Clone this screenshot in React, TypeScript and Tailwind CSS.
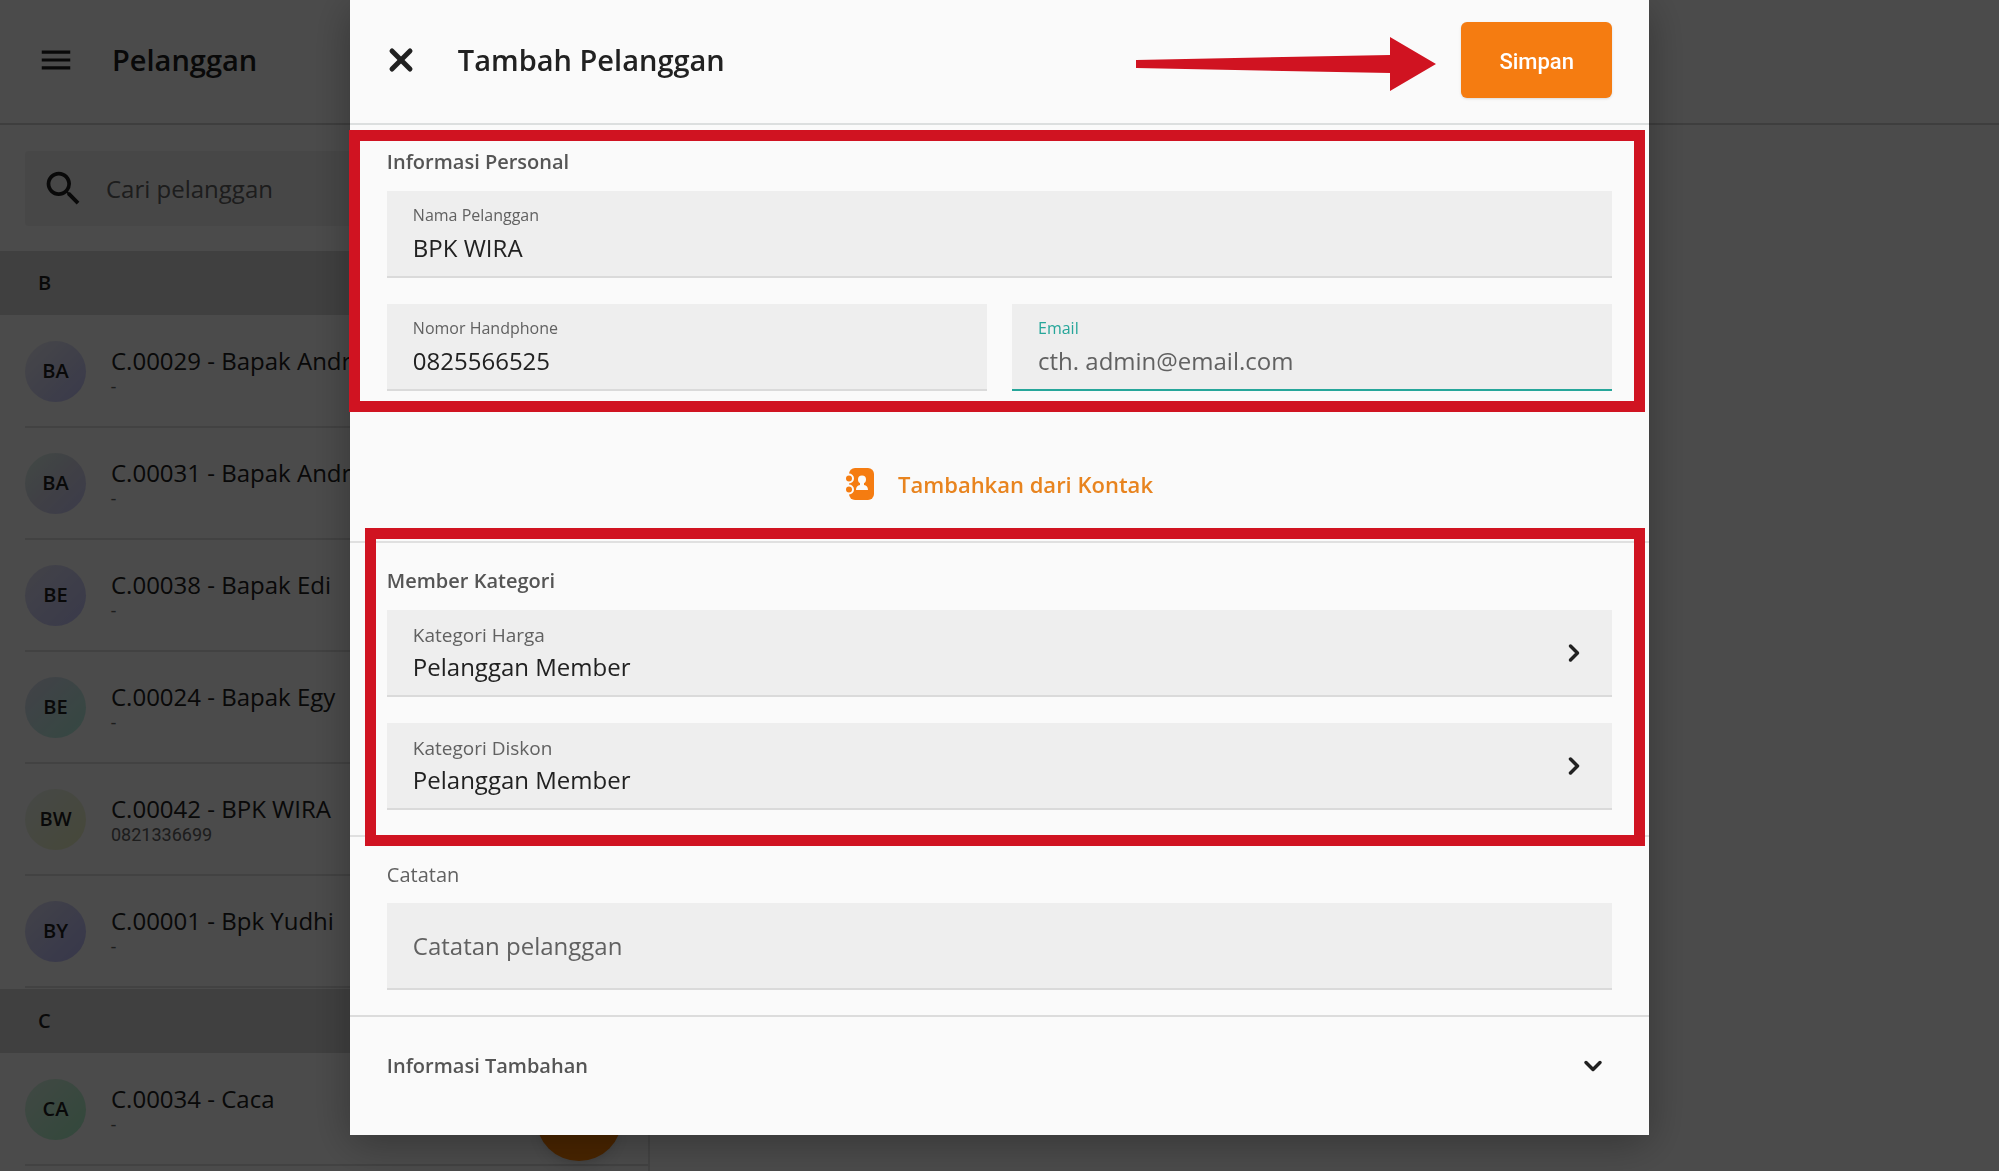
import { useState } from "react";
import { MdMenu, MdSearch } from "react-icons/md";
import { ChevronDown, ChevronRight, X } from "lucide-react";

type Customer = {
  code: string;
  name: string;
  phone: string;
  initials: string;
  color: string;
};

const customerGroups: { letter: string; customers: Customer[] }[] = [
  {
    letter: "B",
    customers: [
      { code: "C.00029", name: "Bapak Andri", phone: "-", initials: "BA", color: "from-[#ececf2] to-[#c0c0f8]" },
      { code: "C.00031", name: "Bapak Andri", phone: "-", initials: "BA", color: "from-[#dcf4e6] via-[#d6d6e8] to-[#c8c8f8]" },
      { code: "C.00038", name: "Bapak Edi", phone: "-", initials: "BE", color: "from-[#e0e0f0] to-[#c0c0f8]" },
      { code: "C.00024", name: "Bapak Egy", phone: "-", initials: "BE", color: "from-[#dcdcf0] to-[#b0f0dc]" },
      { code: "C.00042", name: "BPK WIRA", phone: "0821336699", initials: "BW", color: "from-[#eaf2ec] to-[#ecf0c0]" },
      { code: "C.00001", name: "Bpk Yudhi", phone: "-", initials: "BY", color: "from-[#dedef2] to-[#b8b8fa]" },
    ],
  },
  {
    letter: "C",
    customers: [
      { code: "C.00034", name: "Caca", phone: "-", initials: "CA", color: "from-[#d8f0e2] to-[#a8f0c6]" },
    ],
  },
];

const CustomerRow = ({ customer }: { customer: Customer }) => (
  <li className="ml-[25px] flex h-[112px] items-center border-b-2 border-[#dcdcdc]">
    <div
      className={`flex size-[61px] shrink-0 items-center justify-center rounded-full bg-linear-to-br text-xl font-semibold ${customer.color}`}
    >
      {customer.initials}
    </div>
    <div className="ml-[25px]">
      <p className="text-2xl leading-8 whitespace-nowrap">
        {customer.code} - {customer.name}
      </p>
      <p className="font-[Roboto,sans-serif] text-lg leading-5 text-[#616161]">
        {customer.phone}
      </p>
    </div>
  </li>
);

const CustomerPage = () => (
  <div className="flex h-screen flex-col overflow-hidden bg-[#fafafa]">
    <header className="flex h-[125px] shrink-0 items-center border-b-2 border-[#cfcfcf] pb-1 pl-[37px]">
      <button aria-label="Menu">
        <MdMenu size={38} />
      </button>
      <h1 className="ml-[37px] text-[29px] font-semibold">Pelanggan</h1>
    </header>
    <div className="flex min-h-0 flex-1">
      <aside className="relative w-[32.5%] overflow-hidden border-r-2 border-[#e0e0e0]">
        <label className="mx-[25px] mt-[26px] mb-[25px] flex h-[75px] items-center rounded bg-[#eeeeee] pl-4">
          <MdSearch size={45} className="shrink-0" />
          <input
            type="text"
            aria-label="Cari pelanggan"
            placeholder="Cari pelanggan"
            className="ml-5 w-full bg-transparent text-2xl outline-none placeholder:text-[#616161]"
          />
        </label>
        {customerGroups.map((group) => (
          <section key={group.letter}>
            <h2 className="flex h-16 items-center bg-[#d6d6d6] pl-[38px] text-xl font-semibold">
              {group.letter}
            </h2>
            <ul className="py-px">
              {group.customers.map((customer) => (
                <CustomerRow key={customer.code} customer={customer} />
              ))}
            </ul>
          </section>
        ))}
        <button
          aria-label="Tambah pelanggan"
          className="absolute right-[26px] bottom-[10px] size-[86px] rounded-full bg-[#f57c00] shadow-lg"
        />
      </aside>
      <main className="flex-1" />
    </div>
  </div>
);

type FieldProps = {
  id: string;
  label: string;
  value: string;
  onChange: (value: string) => void;
  placeholder?: string;
  active?: boolean;
};

const TextField = ({ id, label, value, onChange, placeholder, active }: FieldProps) => (
  <div
    className={`h-[87px] border-b-2 bg-[#eeeeee] px-[26px] pt-3 ${active ? "border-[#26a69a]" : "border-[#dadada]"}`}
  >
    <label
      htmlFor={id}
      className={`block text-base leading-6 ${active ? "text-[#26a69a]" : "text-[#616161]"}`}
    >
      {label}
    </label>
    <input
      id={id}
      type="text"
      value={value}
      placeholder={placeholder}
      onChange={(e) => onChange(e.target.value)}
      className="block h-10 w-full bg-transparent text-2xl outline-none placeholder:text-[#616161]"
    />
  </div>
);

const PickerField = ({ label, value }: { label: string; value: string }) => (
  <button className="flex h-[87px] w-full items-center justify-between border-b-2 border-[#dadada] bg-[#eeeeee] pr-6 pl-[26px] text-left">
    <span>
      <span className="block text-[19px] leading-7 text-[#616161]">{label}</span>
      <span className="block text-2xl leading-9">{value}</span>
    </span>
    <ChevronRight size={28} strokeWidth={3} />
  </button>
);

const ContactIcon = () => (
  <svg width="28" height="32" viewBox="0 0 28 32" aria-hidden="true">
    <rect x="3" width="25" height="32" rx="6" fill="#f57c11" />
    <g fill="#f57c11" stroke="#fafafa" strokeWidth="2">
      <circle cx="3" cy="10.500" r="4" />
      <circle cx="3" cy="21.500" r="4" />
    </g>
    <circle cx="16" cy="11.500" r="4" fill="#fafafa" />
    <path d="M14 14h4v3c2.500.6 4 2 4 5H10c0-3 1.500-4.400 4-5z" fill="#fafafa" />
  </svg>
);

const AddCustomerDialog = () => {
  const [name, setName] = useState("BPK WIRA");
  const [phone, setPhone] = useState("0825566525");
  const [email, setEmail] = useState("");
  const [note, setNote] = useState("");

  return (
    <div
      role="dialog"
      aria-labelledby="dialog-title"
      className="relative w-[65%] self-start bg-[#fafafa] shadow-[0_8px_40px_0_rgba(0,0,0,0.3)]"
    >
      <header className="flex h-[125px] items-center border-b-2 border-[#dcdfdf] pr-[37px] pb-[3px] pl-[33px]">
        <button aria-label="Tutup">
          <X size={36} strokeWidth={3.3} />
        </button>
        <h2 id="dialog-title" className="ml-[39px] text-[29px] font-semibold">
          Tambah Pelanggan
        </h2>
        {/* Arrow pointing at the save button */}
        <svg
          width="300"
          height="54"
          viewBox="0 0 300 54"
          className="mt-2 mr-[25px] ml-auto"
          aria-hidden="true"
        >
          <path d="M0 23L254 18V0L300 27L254 54V36L0 31Z" fill="#d01321" />
        </svg>
        <button className="h-[76px] w-[151px] rounded-md bg-[#f57c11] pt-[3px] font-[Roboto,sans-serif] text-[22px] font-medium text-white shadow-sm">
          Simpan
        </button>
      </header>

      {/* Personal information */}
      <section className="px-[37px] pt-[23px]">
        <h3 className="mb-[15px] text-xl leading-7 font-semibold text-[#555555]">
          Informasi Personal
        </h3>
        <TextField id="name" label="Nama Pelanggan" value={name} onChange={setName} />
        <div className="mt-[26px] grid grid-cols-2 gap-[25px]">
          <TextField id="phone" label="Nomor Handphone" value={phone} onChange={setPhone} />
          <TextField
            id="email"
            label="Email"
            value={email}
            onChange={setEmail}
            placeholder="cth. admin@email.com"
            active
          />
        </div>
      </section>
      <div className="flex h-[152px] items-center justify-center border-b-2 border-[#e0e0e0] pt-9">
        <button className="flex items-center gap-6 text-[22px] font-semibold text-[#e8841f]">
          <ContactIcon />
          Tambahkan dari Kontak
        </button>
      </div>

      {/* Member category */}
      <section className="border-b-2 border-[#e0e0e0] px-[37px] pt-6 pb-[25px]">
        <h3 className="mb-[15px] text-xl leading-7 font-semibold text-[#555555]">
          Member Kategori
        </h3>
        <div className="space-y-[26px]">
          <PickerField label="Kategori Harga" value="Pelanggan Member" />
          <PickerField label="Kategori Diskon" value="Pelanggan Member" />
        </div>
      </section>

      {/* Notes */}
      <section className="border-b-2 border-[#dcdcdc] px-[37px] pt-6 pb-[25px]">
        <label htmlFor="note" className="mb-[14px] block text-xl leading-7 text-[#616161]">
          Catatan
        </label>
        <input
          id="note"
          type="text"
          value={note}
          placeholder="Catatan pelanggan"
          onChange={(e) => setNote(e.target.value)}
          className="block h-[87px] w-full border-b-2 border-[#dadada] bg-[#eeeeee] px-[26px] text-2xl outline-none placeholder:text-[#616161]"
        />
      </section>

      <button className="flex h-[118px] w-full items-center justify-between pr-[42px] pb-5 pl-[37px] text-xl font-semibold text-[#555555]">
        Informasi Tambahan
        <ChevronDown size={28} strokeWidth={3} className="text-[#212121]" />
      </button>

      {/* Highlight frames */}
      <div className="pointer-events-none absolute top-[130px] right-1 -left-px h-[282px] border-[11px] border-[#d01321]" />
      <div className="pointer-events-none absolute top-[528px] right-1 left-[15px] h-[318px] border-[11px] border-[#d01321]" />
    </div>
  );
};

const App = () => {
  return (
    <div className="font-['Open_Sans',sans-serif] text-[#212121]">
      <CustomerPage />
      <div className="fixed inset-0 flex justify-center overflow-hidden bg-black/70">
        <AddCustomerDialog />
      </div>
    </div>
  );
};

export default App;
